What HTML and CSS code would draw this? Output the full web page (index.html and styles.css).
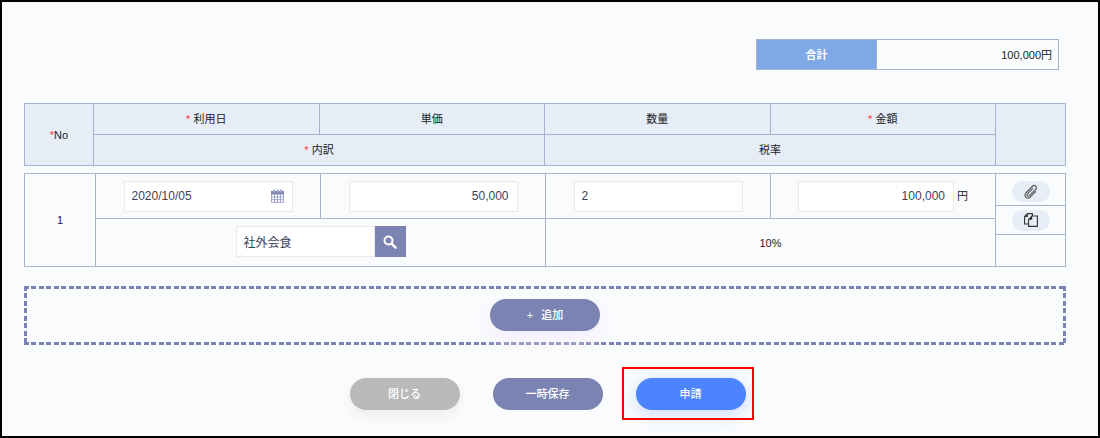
FILE: index.html
```html
<!DOCTYPE html>
<html lang="ja">
<head>
  <meta charset="UTF-8" />
  <meta name="viewport" content="width=device-width, initial-scale=1.0" />
  <title>経費申請</title>
  <link rel="stylesheet" href="styles.css">
</head>
<body>
  <form class="page">

    <table class="total">
      <tr>
        <th scope="row">合計</th>
        <td>100,000円</td>
      </tr>
    </table>

    <table class="grid grid-head">
      <colgroup>
        <col class="col-no"><col><col><col><col><col class="col-side">
      </colgroup>
      <tr>
        <th rowspan="2"><span class="req">*</span>No</th>
        <th><span class="req">*</span> 利用日</th>
        <th>単価</th>
        <th>数量</th>
        <th><span class="req">*</span> 金額</th>
        <th rowspan="2"></th>
      </tr>
      <tr>
        <th colspan="2"><span class="req">*</span> 内訳</th>
        <th colspan="2">税率</th>
      </tr>
    </table>

    <table class="grid grid-body">
      <colgroup>
        <col class="col-no"><col><col><col><col><col class="col-side">
      </colgroup>
      <tr class="row-tall">
        <td rowspan="4">1</td>
        <td rowspan="2">
          <div class="date">
            <input type="text" class="field" aria-label="利用日" value="2020/10/05">
            <svg class="calendar" viewBox="0 0 13 14" width="13" height="14" aria-hidden="true">
              <path d="M0 2h13v3.500H0z" fill="#7b83b3"/>
              <path d="M2 .5h2v3H2zM5.500.5h2v3h-2zM9 .5h2v3H9z" fill="#a4aacd"/>
              <path d="M.5 5v8.400h12V5M3.500 5v8.400M6.500 5v8.400M9.500 5v8.400M.5 8h12M.5 10.700h12" fill="none" stroke="#a0a6cc"/>
            </svg>
          </div>
        </td>
        <td rowspan="2"><input type="text" class="field num" aria-label="単価" value="50,000"></td>
        <td rowspan="2"><input type="text" class="field" aria-label="数量" value="2"></td>
        <td rowspan="2">
          <label class="amount"><input type="text" class="field num" aria-label="金額" value="100,000">円</label>
        </td>
        <td class="side side-top">
          <button type="button" class="pill" aria-label="添付">
            <svg viewBox="0 0 16 16" width="16" height="16">
              <g transform="rotate(45 8 8)" fill="none" stroke="#555" stroke-width="1.200" stroke-linecap="round">
                <path d="M11 4.500v7.700a3 3 0 0 1-6 0V2.800a2.200 2.200 0 0 1 4.400 0v9a1.300 1.300 0 0 1-2.600 0V4.500"/>
              </g>
            </svg>
          </button>
        </td>
      </tr>
      <tr class="row-a">
        <td class="side" rowspan="2">
          <button type="button" class="pill" aria-label="コピー">
            <svg viewBox="0 0 14 14" width="14" height="14">
              <path d="M4.500 11H.6V3.600L3.600.600h4.800V3" fill="none" stroke="#333" stroke-width="1.100"/>
              <path d="M3.900.600v3.300H.6z" fill="#333"/>
              <path d="M4.600 6.400L8 3h5.400v10.400H4.600z" fill="#e6edf7" stroke="#333" stroke-width="1.100"/>
              <path d="M8.200 3v3.700H4.600z" fill="#333"/>
            </svg>
          </button>
        </td>
      </tr>
      <tr class="row-b">
        <td colspan="2" rowspan="2">
          <div class="search">
            <input type="text" class="field" aria-label="内訳" value="社外会食">
            <button type="button" class="search-btn" aria-label="検索">
              <svg viewBox="0 0 14 14" width="14" height="14">
                <circle cx="5.500" cy="5.500" r="4" fill="none" stroke="#fff" stroke-width="2"/>
                <path d="M8.600 8.600l4 4" stroke="#fff" stroke-width="2.400" stroke-linecap="round"/>
              </svg>
            </button>
          </div>
        </td>
        <td colspan="2" rowspan="2">10%</td>
      </tr>
      <tr class="row-tall">
        <td></td>
      </tr>
    </table>

    <div class="add">
      <button type="button" class="btn btn-add"><span>+</span>追加</button>
    </div>

    <div class="actions">
      <button type="button" class="btn btn-close">閉じる</button>
      <button type="button" class="btn">一時保存</button>
      <div class="marked">
        <button type="submit" class="btn btn-submit">申請</button>
      </div>
    </div>

  </form>
</body>
</html>
```
FILE: styles.css
```css
* {
  box-sizing: border-box;
}

body {
  margin: 0;
  min-height: 100vh;
  border: 2px solid #000;
  background-color: #f9fbfd;
  color: #222;
  font-family: "Liberation Sans", "Noto Sans CJK JP", sans-serif;
  font-size: 11px;
  line-height: 16px;
}

input, button {
  font: inherit;
  margin: 0;
}

button {
  border: none;
  cursor: pointer;
}

.page {
  padding: 37px 32px 24px 22px;
}

table {
  border-collapse: collapse;
}

th, td {
  padding: 0;
  border: 1px solid #a5b3d2;
  text-align: center;
  font-weight: normal;
}

/* total */
.total {
  margin: 0 7px 33px auto;
}

.total th {
  width: 120px;
  height: 30px;
  background-color: #7ea8e6;
  color: #fff;
  font-weight: bold;
}

.total td {
  width: 182px;
  padding-right: 6px;
  text-align: right;
}

/* detail rows */
.grid {
  width: 100%;
  table-layout: fixed;
}

.grid-head {
  background-color: #e6edf7;
  margin-bottom: 7px;
}

.grid-head th {
  height: 31px;
}

.grid-head .col-no {
  width: 69px;
}

.grid-body .col-no {
  width: 71px;
}

.col-side {
  width: 70px;
}

.req {
  color: #f33;
}

.row-tall {
  height: 32px;
}

.row-a {
  height: 13px;
}

.row-b {
  height: 16px;
}

.field {
  width: 169px;
  height: 31px;
  padding: 0 8px 0 7px;
  border: 1px solid #e8e9ec;
  background-color: #fff;
  color: #3c3f58;
  font-size: 12px;
  vertical-align: middle;
}

.num {
  text-align: right;
}

.date {
  position: relative;
  display: inline-block;
}

.calendar {
  position: absolute;
  right: 9px;
  top: 8px;
}

.amount {
  display: flex;
  justify-content: center;
  align-items: center;
  gap: 3px;
}

.amount .field {
  width: 156px;
}

.search {
  display: flex;
  justify-content: center;
  padding-bottom: 2px;
}

.search .field {
  width: 139px;
}

.search-btn {
  display: flex;
  justify-content: center;
  align-items: center;
  width: 31px;
  height: 31px;
  padding: 0;
  background-color: #7b83b3;
}

.pill {
  display: flex;
  justify-content: center;
  align-items: center;
  width: 38px;
  height: 21px;
  margin: 0 auto;
  padding: 0;
  border-radius: 11px;
  background-color: #e6edf7;
}

.side-top {
  padding-top: 4px;
}

/* add row, dashed frame */
.add {
  --dash: #7b83b3 0 5px, transparent 5px 7px, #7b83b3 7px 12px, transparent 12px 15px;
  display: flex;
  justify-content: center;
  margin-top: 19px;
  padding: 13px 0 14px;
  background:
    repeating-linear-gradient(to right, var(--dash)) top / 100% 3px no-repeat,
    repeating-linear-gradient(to right, var(--dash)) bottom / 100% 3px no-repeat,
    repeating-linear-gradient(to bottom, var(--dash)) left / 3px 100% no-repeat,
    repeating-linear-gradient(to bottom, var(--dash)) right / 3px 100% no-repeat;
}

.btn {
  width: 110px;
  height: 32px;
  padding: 0;
  border-radius: 16px;
  background-color: #7b83b3;
  color: #fff;
  font-weight: 500;
}

.btn-add {
  box-shadow: 0 8px 16px rgba(244, 236, 253, 0.9);
}

.btn-add span {
  margin-right: 8px;
}

.btn-close {
  background-color: #bababa;
  box-shadow: 0 6px 14px rgba(0, 0, 0, 0.06);
}

.btn-submit {
  background-color: #4b84fd;
  box-shadow: 0 4px 16px rgba(75, 132, 253, 0.25);
}

.actions {
  display: flex;
  justify-content: center;
  gap: 33px;
  margin-top: 33px;
  padding-left: 5px;
}

.marked {
  position: relative;
}

/* red frame round the submit button */
.marked::after {
  content: "";
  position: absolute;
  inset: -11px -8px -10px -14px;
  border: 2px solid #f00;
  pointer-events: none;
}
```
